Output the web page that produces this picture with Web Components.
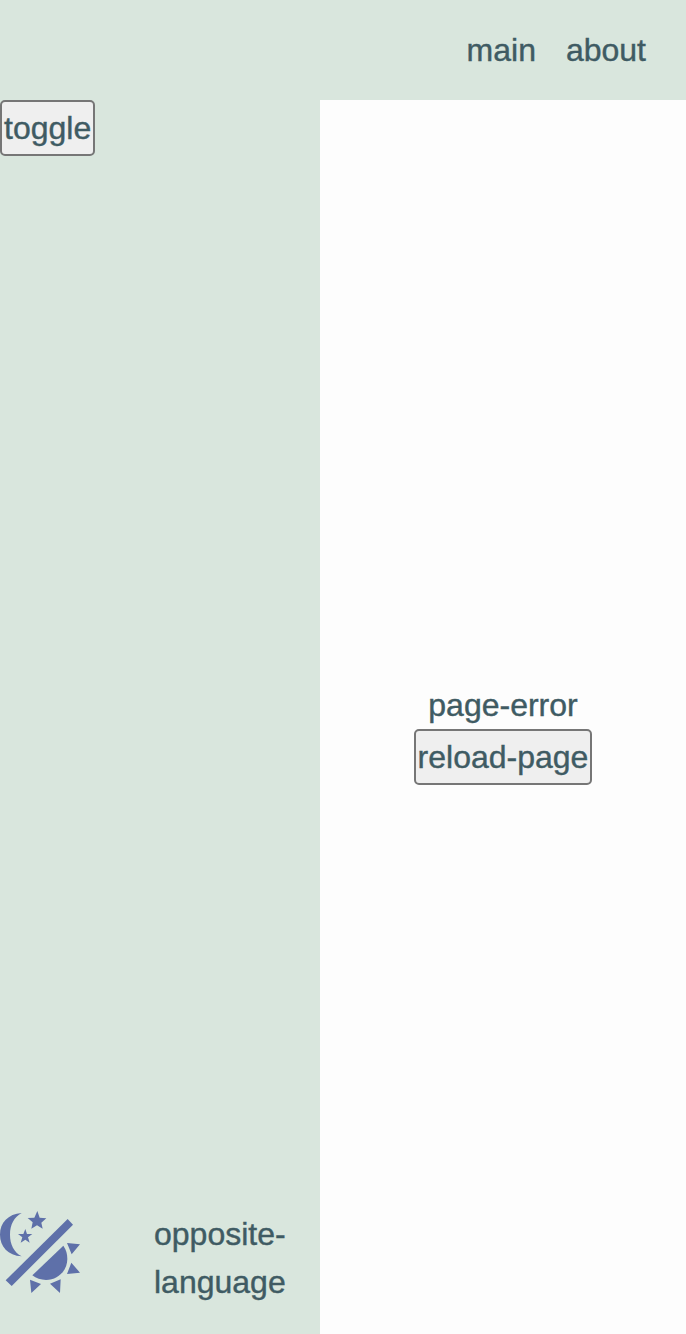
<!DOCTYPE html>
<html lang="en">
<head>
<meta charset="utf-8">
<title>page-error</title>
<style>
html, body { margin: 0; height: 100%; }
body { font: 32px/48px "Liberation Sans", Arial, sans-serif; -webkit-text-stroke: .4px #3f5b63; color: #3f5b63; background: #fdfdfd; --panel: #d9e6dd; --icon: #5e70a9; }
</style>
</head>
<body>
<app-layout>
  <nav-bar slot="header"><nav-link>main</nav-link><nav-link>about</nav-link></nav-bar>
  <side-bar slot="sidebar">
    <app-button>toggle</app-button>
    <theme-icon slot="footer"></theme-icon>
    <lang-switch slot="footer">opposite-language</lang-switch>
  </side-bar>
  <page-error>page-error<app-button slot="action">reload-page</app-button></page-error>
</app-layout>
<script>
const define = (name, html) => {
  const template = document.createElement('template');
  template.innerHTML = html;
  customElements.define(name, class extends HTMLElement {
    constructor() {
      super();
      this.attachShadow({ mode: 'open' }).append(template.content.cloneNode(true));
    }
  });
};

define('app-layout', `<style>
  :host { display: flex; flex-direction: column; height: 100vh; }
  .content { display: flex; flex: 1; min-height: 0; }
</style><slot name="header"></slot><div class="content"><slot name="sidebar"></slot><slot></slot></div>`);

define('nav-bar', `<style>
  :host { display: flex; align-items: center; justify-content: flex-end; gap: 30px; height: 100px; padding: 0 40px; box-sizing: border-box; background: var(--panel); }
</style><slot></slot>`);

define('nav-link', `<style>
  :host { display: block; }
</style><slot></slot>`);

define('side-bar', `<style>
  :host { display: flex; flex-direction: column; align-items: flex-start; justify-content: space-between; flex: 0 0 320px; box-sizing: border-box; padding-bottom: 28px; background: var(--panel); }
  .footer { display: flex; align-items: flex-start; gap: 64px; }
</style><slot></slot><div class="footer"><slot name="footer"></slot></div>`);

define('app-button', `<style>
  :host { display: block; }
  button { display: block; margin: 0; padding: 2px; border: 2px solid #767676; border-radius: 5px; background: #efefef; font: inherit; color: inherit; }
</style><button type="button"><slot></slot></button>`);

define('lang-switch', `<style>
  :host { display: block; width: 134px; padding-top: 6px; }
</style><slot></slot>`);

define('theme-icon', `<style>
  :host { display: block; }
  svg { display: block; fill: var(--icon); }
</style><svg width="90" height="96" viewBox="0 0 270 288" aria-hidden="true">
  <path d="M65 27C24 30 0 56 0 92s24 62 65 65C42 145 30 121 30 92s12-53 35-65z"/>
  <path d="M112 21l7 20 20 2-15 13 4 18-17-10-17 10 4-19-15-13 20-1z"/>
  <path d="M76 75l5 15 16 0-13 10 5 16-13-9-14 9 5-16-13-10 16 0z"/>
  <path d="M203 45l16 17L35 246l-18-17z"/>
  <path d="M190 125c9 12 12 27 12 40 0 35-29 63-64 63-15 0-30-5-41-14z"/>
  <path d="M201 117l39 4-25 30zM214 176l26 30-39 4zM90 227l33 13-29 27zM182 226l-2 41-30-28z"/>
</svg>`);

define('page-error', `<style>
  :host { display: flex; flex-direction: column; align-items: center; justify-content: center; flex: 1; box-sizing: border-box; padding-top: 32px; }
</style><div><slot></slot></div><slot name="action"></slot>`);
</script>
</body>
</html>
